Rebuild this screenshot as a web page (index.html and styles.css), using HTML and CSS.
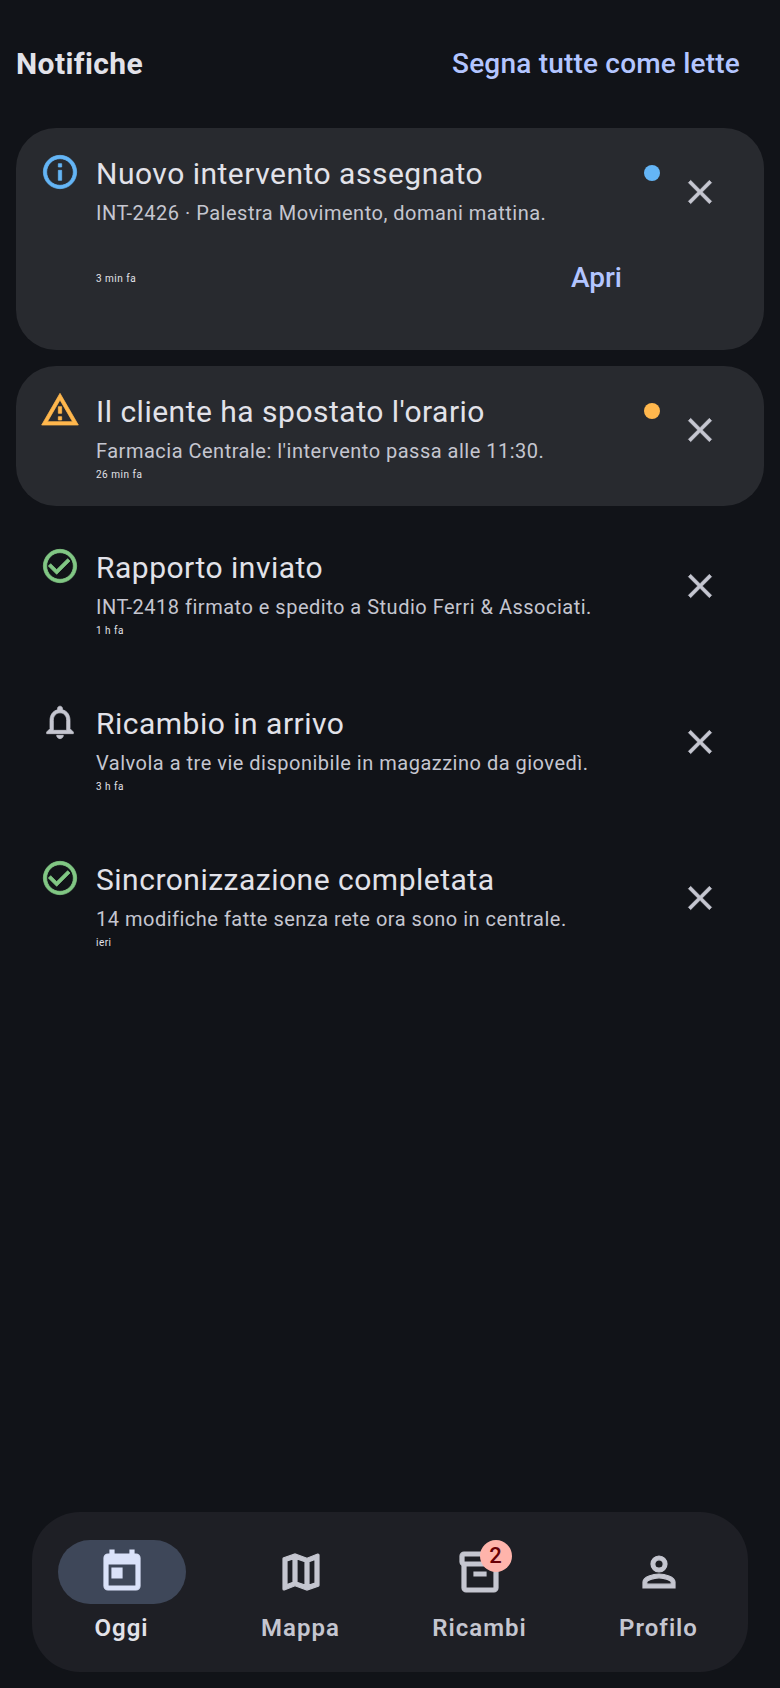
FILE: index.html
```html
<!DOCTYPE html>
<html lang="it">
<head>
  <meta charset="UTF-8" />
  <meta name="viewport" content="width=device-width, initial-scale=1.0" />
  <title>Notifiche</title>
  <link rel="stylesheet" href="styles.css">
</head>
<body>
  <div class="screen">
    <header class="app-bar">
      <h1>Notifiche</h1>
      <button class="mark-all">Segna tutte come lette</button>
    </header>

    <main class="list">
      <article class="item unread">
        <svg class="icon lead info" viewBox="0 0 24 24"><path d="M11 7h2v2h-2zm0 4h2v6h-2zm1-9C6.48 2 2 6.48 2 12s4.48 10 10 10 10-4.48 10-10S17.52 2 12 2zm0 18c-4.41 0-8-3.59-8-8s3.59-8 8-8 8 3.59 8 8-3.59 8-8 8z"/></svg>
        <div class="text">
          <h2>Nuovo intervento assegnato</h2>
          <p class="body">INT-2426 · Palestra Movimento, domani mattina.</p>
          <div class="meta-row">
            <span class="time">3 min fa</span>
            <button class="open">Apri</button>
          </div>
        </div>
        <span class="dot dot-info"></span>
        <button class="close" aria-label="Chiudi"><svg class="icon" viewBox="0 0 24 24"><path d="M19 6.41L17.59 5 12 10.59 6.41 5 5 6.41 10.59 12 5 17.59 6.41 19 12 13.41 17.59 19 19 17.59 13.41 12z"/></svg></button>
      </article>

      <article class="item unread">
        <svg class="icon lead warn" viewBox="0 0 24 24"><path d="M12 5.99L19.53 19H4.47L12 5.99M12 2L1 21h22L12 2zm1 14h-2v2h2v-2zm0-6h-2v4h2v-4z"/></svg>
        <div class="text">
          <h2>Il cliente ha spostato l'orario</h2>
          <p class="body">Farmacia Centrale: l'intervento passa alle 11:30.</p>
          <span class="time">26 min fa</span>
        </div>
        <span class="dot dot-warn"></span>
        <button class="close" aria-label="Chiudi"><svg class="icon" viewBox="0 0 24 24"><path d="M19 6.41L17.59 5 12 10.59 6.41 5 5 6.41 10.59 12 5 17.59 6.41 19 12 13.41 17.59 19 19 17.59 13.41 12z"/></svg></button>
      </article>

      <article class="item">
        <svg class="icon lead ok" viewBox="0 0 24 24"><path d="M16.59 7.58L10 14.17l-3.59-3.58L5 12l5 5 8-8zM12 2C6.48 2 2 6.48 2 12s4.48 10 10 10 10-4.48 10-10S17.52 2 12 2zm0 18c-4.42 0-8-3.58-8-8s3.58-8 8-8 8 3.58 8 8-3.58 8-8 8z"/></svg>
        <div class="text">
          <h2>Rapporto inviato</h2>
          <p class="body">INT-2418 firmato e spedito a Studio Ferri &amp; Associati.</p>
          <span class="time">1 h fa</span>
        </div>
        <button class="close" aria-label="Chiudi"><svg class="icon" viewBox="0 0 24 24"><path d="M19 6.41L17.59 5 12 10.59 6.41 5 5 6.41 10.59 12 5 17.59 6.41 19 12 13.41 17.59 19 19 17.59 13.41 12z"/></svg></button>
      </article>

      <article class="item">
        <svg class="icon lead muted" viewBox="0 0 24 24"><path d="M12 22c1.1 0 2-.9 2-2h-4c0 1.1.9 2 2 2zm6-6v-5c0-3.07-1.63-5.64-4.5-6.32V4c0-.83-.67-1.5-1.5-1.5s-1.5.67-1.5 1.5v.68C7.64 5.36 6 7.92 6 11v5l-2 2v1h16v-1l-2-2zm-2 1H8v-6c0-2.48 1.51-4.5 4-4.5s4 2.02 4 4.5v6z"/></svg>
        <div class="text">
          <h2>Ricambio in arrivo</h2>
          <p class="body">Valvola a tre vie disponibile in magazzino da giovedì.</p>
          <span class="time">3 h fa</span>
        </div>
        <button class="close" aria-label="Chiudi"><svg class="icon" viewBox="0 0 24 24"><path d="M19 6.41L17.59 5 12 10.59 6.41 5 5 6.41 10.59 12 5 17.59 6.41 19 12 13.41 17.59 19 19 17.59 13.41 12z"/></svg></button>
      </article>

      <article class="item">
        <svg class="icon lead ok" viewBox="0 0 24 24"><path d="M16.59 7.58L10 14.17l-3.59-3.58L5 12l5 5 8-8zM12 2C6.48 2 2 6.48 2 12s4.48 10 10 10 10-4.48 10-10S17.52 2 12 2zm0 18c-4.42 0-8-3.58-8-8s3.58-8 8-8 8 3.58 8 8-3.58 8-8 8z"/></svg>
        <div class="text">
          <h2>Sincronizzazione completata</h2>
          <p class="body">14 modifiche fatte senza rete ora sono in centrale.</p>
          <span class="time">ieri</span>
        </div>
        <button class="close" aria-label="Chiudi"><svg class="icon" viewBox="0 0 24 24"><path d="M19 6.41L17.59 5 12 10.59 6.41 5 5 6.41 10.59 12 5 17.59 6.41 19 12 13.41 17.59 19 19 17.59 13.41 12z"/></svg></button>
      </article>
    </main>

    <nav class="bottom-nav">
      <a class="nav-item active">
        <span class="nav-pill"><svg class="nav-icon" viewBox="0 0 24 24"><path d="M19 3h-1V1h-2v2H8V1H6v2H5c-1.11 0-1.99.9-1.99 2L3 19c0 1.1.89 2 2 2h14c1.1 0 2-.9 2-2V5c0-1.1-.9-2-2-2zm0 16H5V8h14v11zM7 10h5v5H7z"/></svg></span>
        <span class="nav-label">Oggi</span>
      </a>
      <a class="nav-item">
        <span class="nav-pill"><svg class="nav-icon" viewBox="0 0 24 24"><path d="M20.5 3l-.16.03L15 5.1 9 3 3.36 4.9c-.21.07-.36.25-.36.48V20.5c0 .28.22.5.5.5l.16-.03L9 18.9l6 2.1 5.64-1.9c.21-.07.36-.25.36-.48V3.5c0-.28-.22-.5-.5-.5zM10 5.47l4 1.4v11.66l-4-1.4V5.47zm-5 .99l3-1.01v11.7l-3 1.16V6.46zm14 11.08l-3 1.01V6.86l3-1.16v11.84z"/></svg></span>
        <span class="nav-label">Mappa</span>
      </a>
      <a class="nav-item">
        <span class="nav-pill">
          <svg class="nav-icon" viewBox="0 0 24 24"><path d="M20 2H4c-1 0-2 .9-2 2v3.01c0 .72.43 1.34 1 1.69V20c0 1.1 1.1 2 2 2h14c.9 0 2-.9 2-2V8.7c.57-.35 1-.97 1-1.69V4c0-1.1-1-2-2-2zm-1 18H5V9h14v11zm1-13H4V4h16v3zM9 12h6v2H9z"/></svg>
          <span class="badge">2</span>
        </span>
        <span class="nav-label">Ricambi</span>
      </a>
      <a class="nav-item">
        <span class="nav-pill"><svg class="nav-icon" viewBox="0 0 24 24"><path d="M12 5.9c1.16 0 2.1.94 2.1 2.1s-.94 2.1-2.1 2.1S9.9 9.16 9.9 8s.94-2.1 2.1-2.1m0 9c2.97 0 6.1 1.46 6.1 2.1v1.1H5.9V17c0-.64 3.13-2.1 6.1-2.1M12 4C9.79 4 8 5.79 8 8s1.79 4 4 4 4-1.79 4-4-1.79-4-4-4zm0 9c-2.67 0-8 1.34-8 4v3h16v-3c0-2.66-5.33-4-8-4z"/></svg></span>
        <span class="nav-label">Profilo</span>
      </a>
    </nav>
  </div>
</body>
</html>
```

FILE: styles.css
```css
* {
  box-sizing: border-box;
}

body {
  margin: 0;
  background: #111318;
  color: #e2e2e9;
  font-family: Roboto, sans-serif;
}

button {
  border: none;
  background: none;
  padding: 0;
  font-family: inherit;
  cursor: pointer;
}

.screen {
  display: flex;
  flex-direction: column;
  min-height: 100vh;
}

.app-bar {
  display: flex;
  justify-content: space-between;
  align-items: center;
  height: 128px;
  padding: 0 40px 0 16px;
}

.app-bar h1 {
  margin: 0;
  font-size: 30px;
  font-weight: 700;
  line-height: 40px;
  letter-spacing: 0.4px;
}

.mark-all {
  color: #b3c5ff;
  font-size: 28px;
  font-weight: 500;
  line-height: 40px;
  letter-spacing: 0.2px;
}

.list {
  flex: 1;
  display: flex;
  flex-direction: column;
  gap: 16px;
  padding: 0 16px;
}

.item {
  display: flex;
  align-items: flex-start;
  height: 140px;
  padding: 24px;
  border-radius: 40px;
}

.item:first-child {
  height: 222px;
}

.unread {
  background: #282a2f;
}

.icon {
  display: block;
  width: 40px;
  height: 40px;
  flex: none;
  fill: #c5c6d0;
  stroke: #c5c6d0;
  stroke-width: 0.35;
}

.lead {
  margin-right: 16px;
  stroke-width: 0.45;
}

.info { fill: #64b5f6; stroke: #64b5f6; }
.warn { fill: #ffb74d; stroke: #ffb74d; }
.ok { fill: #81c784; stroke: #81c784; }

.text {
  flex: 1;
  min-width: 0;
  display: flex;
  flex-direction: column;
  align-items: stretch;
}

.text h2 {
  margin: 0;
  font-size: 30px;
  font-weight: 400;
  line-height: 44px;
  letter-spacing: 0.5px;
}

.body {
  margin: 1px 0 -1px;
  color: #c5c6d0;
  font-size: 20px;
  line-height: 32px;
  letter-spacing: 0.5px;
}

.time {
  margin-top: 1px;
  color: #e2e2e9;
  font-size: 10px;
  line-height: 16px;
  letter-spacing: 0.5px;
}

.meta-row {
  display: flex;
  justify-content: space-between;
  align-items: center;
  height: 96px;
  margin-top: 2px;
}

.open {
  color: #b3c5ff;
  font-size: 28px;
  font-weight: 500;
  line-height: 40px;
  padding: 0 22px 0 0;
}

.dot {
  width: 16px;
  height: 16px;
  margin-top: 13px;
  border-radius: 50%;
  flex: none;
}

.dot-info { background: #64b5f6; }
.dot-warn { background: #ffb74d; }

.close {
  display: flex;
  justify-content: center;
  align-items: center;
  width: 80px;
  height: 80px;
  flex: none;
}

.bottom-nav {
  display: grid;
  grid-template-columns: repeat(4, 1fr);
  height: 160px;
  margin: 0 32px 16px;
  padding-top: 28px;
  border-radius: 48px;
  background: #1e1f25;
}

.nav-item {
  display: flex;
  flex-direction: column;
  align-items: center;
  gap: 4px;
  color: #c5c6d0;
}

.nav-pill {
  position: relative;
  display: flex;
  justify-content: center;
  align-items: center;
  width: 128px;
  height: 64px;
  border-radius: 32px;
}

.active .nav-pill {
  background: #3e4759;
}

.active {
  color: #e2e2e9;
}

.nav-icon {
  width: 48px;
  height: 48px;
  fill: currentColor;
  stroke: currentColor;
  stroke-width: 0.6;
}

.active .nav-icon {
  fill: #dae2f9;
  stroke: #dae2f9;
}

.nav-label {
  font-size: 24px;
  font-weight: 600;
  line-height: 40px;
  letter-spacing: 1px;
}

.badge {
  position: absolute;
  top: 0;
  left: 64px;
  width: 32px;
  height: 32px;
  border-radius: 50%;
  background: #ffb4ab;
  color: #690005;
  font-size: 22px;
  font-weight: 500;
  line-height: 32px;
  text-align: center;
}
```
